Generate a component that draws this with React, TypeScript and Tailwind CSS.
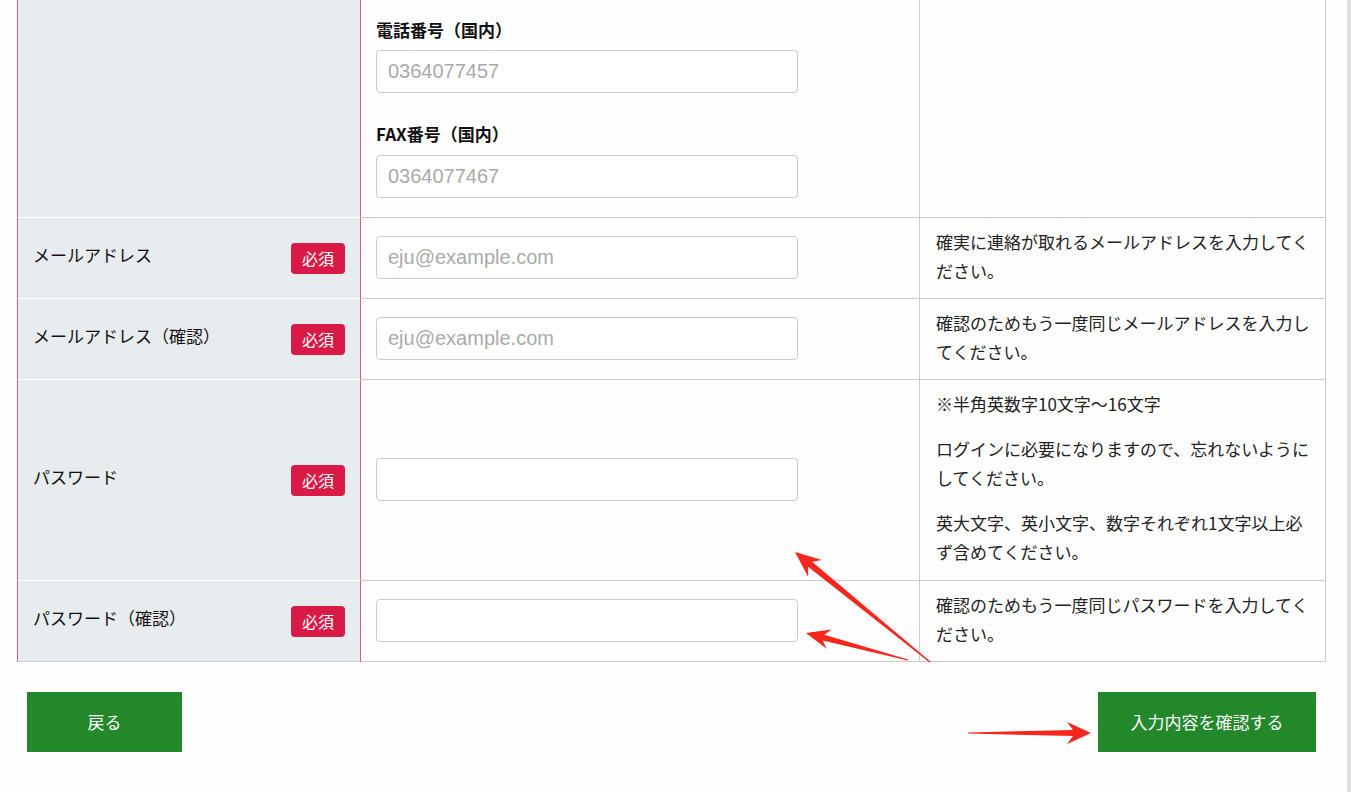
import React from "react";

const jp = { fontFamily: '"Noto Sans CJK JP", "Noto Sans", sans-serif' };
const latin = { fontFamily: '"Liberation Sans", Arial, sans-serif' };

type Row = {
  label: string;
  placeholder?: string;
  notes: string[];
  tall?: boolean;
  last?: boolean;
};

const rows: Row[] = [
  {
    label: "メールアドレス",
    placeholder: "eju@example.com",
    notes: ["確実に連絡が取れるメールアドレスを入力してください。"],
  },
  {
    label: "メールアドレス（確認）",
    placeholder: "eju@example.com",
    notes: ["確認のためもう一度同じメールアドレスを入力してください。"],
  },
  {
    label: "パスワード",
    notes: [
      "※半角英数字10文字～16文字",
      "ログインに必要になりますので、忘れないようにしてください。",
      "英大文字、英小文字、数字それぞれ1文字以上必ず含めてください。",
    ],
    tall: true,
  },
  {
    label: "パスワード（確認）",
    notes: ["確認のためもう一度同じパスワードを入力してください。"],
    last: true,
  },
];

// tapered arrow, thin at the tail, barbed head at the tip
const arrowPoints = (tx: number, ty: number, px: number, py: number, head = 26, barb = 11, shaft = 3.2) => {
  const dx = px - tx;
  const dy = py - ty;
  const L = Math.hypot(dx, dy);
  const ux = dx / L;
  const uy = dy / L;
  const nx = -uy;
  const ny = ux;
  const at = (s: number, w: number) => `${tx + ux * s + nx * w},${ty + uy * s + ny * w}`;
  return [
    at(0, 0.6),
    at(L - head * 0.75, shaft),
    at(L - head, barb),
    at(L, 0),
    at(L - head, -barb),
    at(L - head * 0.75, -shaft),
    at(0, -0.6),
  ].join(" ");
};

const TextInput = ({ placeholder }: { placeholder?: string }) => (
  <input
    type="text"
    placeholder={placeholder}
    style={latin}
    className="w-[422px] h-[43px] rounded-[4px] border border-[#cccccc] bg-white px-[11px] text-[20px] text-[#333] placeholder:text-[#aaaaaa] outline-none"
  />
);

const Badge = () => (
  <span className="flex items-center justify-center h-[31px] w-[54px] rounded-[4px] bg-[#d91a46] text-white text-[16px]">
    必須
  </span>
);

const FormRow = ({ row }: { row: Row }) => (
  <>
    <div
      className={`flex items-center justify-between bg-[#e7ecef] border-l border-r border-b border-l-[#e0587b] border-r-[#e0587b] pl-[15px] pr-[15px] ${
        row.last ? "border-b-[#cccccc]" : "border-b-white"
      }`}
    >
      <span className="text-[17px] leading-[29px] text-[#111] mb-[8px]">{row.label}</span>
      <Badge />
    </div>
    <div className="flex items-center pl-[15px] pb-[2px] border-b border-r border-[#cccccc]">
      <TextInput placeholder={row.placeholder} />
    </div>
    <div
      className={`flex flex-col justify-center gap-[16px] pl-[16px] pr-[12px] pt-[9px] border-b border-r border-[#cccccc] text-[17px] leading-[29px] text-[#222] ${
        row.tall ? "pb-[14px]" : "pb-[13px]"
      }`}
    >
      {row.notes.map((n) => (
        <p key={n}>{n}</p>
      ))}
    </div>
  </>
);

export default function App() {
  return (
    <div style={jp} className="relative flex w-[1351px] min-h-screen bg-[#fefefe] overflow-hidden">
      <div className="flex-1">
        <div className="ml-[17px] w-[1309px] grid grid-cols-[344px_559px_406px]">
          {/* phone / fax row, scrolled partly out of view */}
          <div className="bg-[#e7ecef] border-l border-r border-b border-l-[#e0587b] border-r-[#e0587b] border-b-white" />
          <div className="flex flex-col pl-[15px] pt-[15px] pb-[19px] border-b border-r border-[#cccccc]">
            <label className="text-[17px] leading-[29px] font-bold text-[#111]">電話番号（国内）</label>
            <div className="mt-[6px]">
              <TextInput placeholder="0364077457" />
            </div>
            <label className="mt-[26px] text-[17px] leading-[29px] font-bold text-[#111]">FAX番号（国内）</label>
            <div className="mt-[7px]">
              <TextInput placeholder="0364077467" />
            </div>
          </div>
          <div className="border-b border-r border-[#cccccc]" />

          {rows.map((r) => (
            <FormRow key={r.label} row={r} />
          ))}
        </div>

        <div className="ml-[17px] w-[1309px] flex justify-between px-[10px] mt-[30px]">
          <button className="w-[155px] h-[60px] bg-[#238829] text-white text-[17px]">戻る</button>
          <button className="w-[218px] h-[60px] bg-[#238829] text-white text-[17px]">入力内容を確認する</button>
        </div>
      </div>
      <div className="w-[4px] bg-[#dedede]" />

      <svg className="absolute inset-0 pointer-events-none" width="1351" height="792">
        <polygon points={arrowPoints(930, 662, 795, 552)} fill="#f8261c" />
        <polygon points={arrowPoints(908, 660, 806, 633, 24, 10, 3)} fill="#f8261c" />
        <polygon points={arrowPoints(968, 733, 1091, 733, 24, 11, 3)} fill="#f8261c" />
      </svg>
    </div>
  );
}
